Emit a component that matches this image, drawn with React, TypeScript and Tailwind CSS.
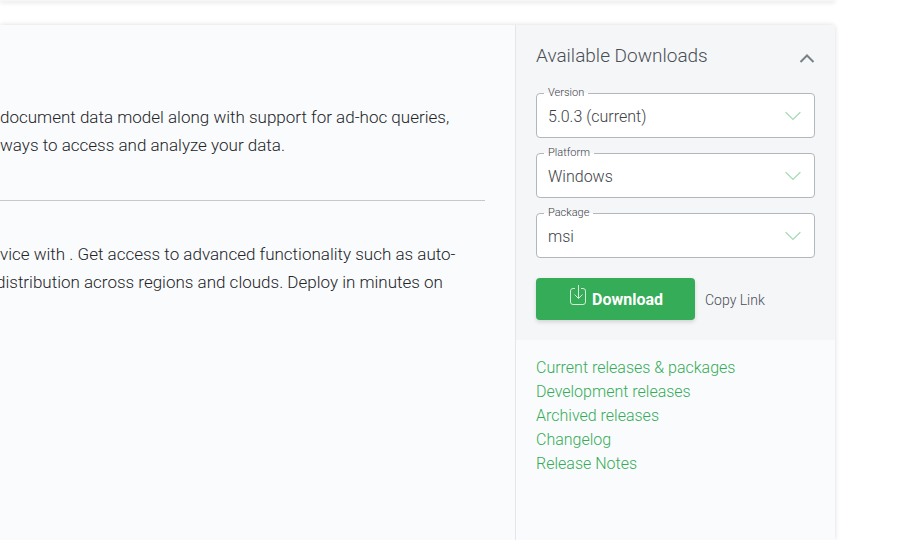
import { useState } from "react";

type FieldProps = { id: string; label: string; options: string[] };

function Field({ id, label, options }: FieldProps) {
  return (
    <div className="relative">
      <label
        htmlFor={id}
        className="absolute -top-2 left-2 bg-linear-to-b from-[#f5f6f8] from-50% to-white to-50% px-1 text-[11px] leading-4 text-[#3d4247]"
      >
        {label}
      </label>
      <select
        id={id}
        className="block h-[45px] w-full appearance-none rounded border border-[#b0b8be] bg-white px-[11px] pt-[2px] text-base font-light text-[#3d4247]"
      >
        {options.map((o) => (
          <option key={o}>{o}</option>
        ))}
      </select>
      <svg
        className="pointer-events-none absolute top-4 right-3 h-3 w-5"
        viewBox="0 0 20 12"
        fill="none"
        stroke="#a5dab5"
        strokeLinecap="round"
        strokeWidth="1.2"
      >
        <path d="M3 3.500 10 10.500l7-7" />
      </svg>
    </div>
  );
}

const links = [
  "Current releases & packages",
  "Development releases",
  "Archived releases",
  "Changelog",
  "Release Notes",
];

export default function App() {
  const [open, setOpen] = useState(true);
  return (
    <div className="flex min-h-screen flex-col overflow-hidden bg-white pr-[65px] font-['Roboto','Liberation_Sans',sans-serif] font-light">
      <div className="h-px bg-[#f5f6f7] shadow-[0_1px_4px_rgba(0,0,0,0.3)]" />
      <main className="mt-6 flex flex-1 rounded-tr bg-[#fafbfd] shadow-[0_0_5px_rgba(0,0,0,0.15)]">
        <section className="min-w-0 flex-1 pt-[78px] pr-[30px] text-[17px] leading-7 whitespace-nowrap text-[#222528]">
          <p>
            document data model along with support for ad-hoc queries,
            <br />
            ways to access and analyze your data.
          </p>
          <hr className="mt-[41px] mb-[39px] border-[#c5c9cc]" />
          <p>vice with . Get access to advanced functionality such as auto-</p>
          <p className="-ml-1">distribution across regions and clouds. Deploy in minutes on</p>
        </section>
        <aside className="w-80 border-l border-[#e4e6e9]">
          <div className="rounded-tr bg-[#f5f6f8] px-5 pt-4 pb-5">
            <div className="flex items-center justify-between">
              <h2 className="pt-px text-[19px] leading-7 font-light text-[#494f55]">Available Downloads</h2>
              <button
                type="button"
                aria-label="Toggle downloads"
                aria-expanded={open}
                onClick={() => setOpen(!open)}
                className="pt-1"
              >
                <svg className="h-4 w-4" viewBox="0 0 16 16" fill="none" stroke="#798186" strokeWidth="2">
                  <path d="m1.500 12 6.500-6.500 6.500 6.500" />
                </svg>
              </button>
            </div>
            {open && (
              <form className="mt-[23px] flex flex-col gap-[15px]" onSubmit={(e) => e.preventDefault()}>
                <Field id="version" label="Version" options={["5.0.3 (current)"]} />
                <Field id="platform" label="Platform" options={["Windows"]} />
                <Field id="package" label="Package" options={["msi"]} />
                <div className="mt-[5px] flex items-center gap-[10px]">
                  <button
                    type="submit"
                    className="flex h-[42px] w-[159px] items-center justify-center gap-1 rounded bg-[#35ac57] text-base font-bold text-white shadow-[0_2px_4px_rgba(0,0,0,0.15)]"
                  >
                    <svg className="mb-2 h-5 w-5" viewBox="0 0 20 20" fill="none" stroke="#d2edd9">
                      <path d="M7 3.500H5A2.500 2.500 0 0 0 2.500 6v11A2.500 2.500 0 0 0 5 19.500h10a2.500 2.500 0 0 0 2.500-2.500V6A2.500 2.500 0 0 0 15 3.500h-2M10.500 0v13.500M6.500 9.500l4 4 4-4" />
                    </svg>
                    <span className="pt-px">Download</span>
                  </button>
                  <button type="button" className="pt-px text-sm text-[#494f55]">
                    Copy Link
                  </button>
                </div>
              </form>
            )}
          </div>
          <nav className="px-5 pt-4">
            <ul className="text-base leading-6 text-[#35ac57]">
              {links.map((l) => (
                <li key={l}>
                  <a href="#">{l}</a>
                </li>
              ))}
            </ul>
          </nav>
        </aside>
      </main>
    </div>
  );
}
